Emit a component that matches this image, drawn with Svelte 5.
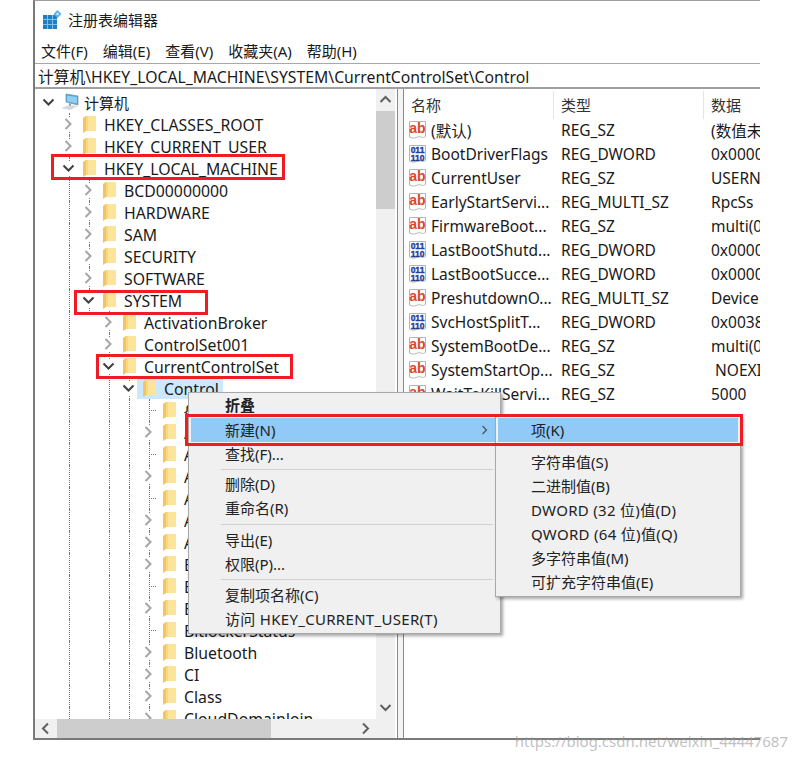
<script lang="ts">
    const menus = ["文件(F)", "编辑(E)", "查看(V)", "收藏夹(A)", "帮助(H)"];

    // d = depth, leaf = no chevron, open = expanded
    const tree = [
        { d: 1, name: "HKEY_CLASSES_ROOT" },
        { d: 1, name: "HKEY_CURRENT_USER" },
        { d: 1, name: "HKEY_LOCAL_MACHINE", open: true },
        { d: 2, name: "BCD00000000" },
        { d: 2, name: "HARDWARE" },
        { d: 2, name: "SAM" },
        { d: 2, name: "SECURITY" },
        { d: 2, name: "SOFTWARE" },
        { d: 2, name: "SYSTEM", open: true },
        { d: 3, name: "ActivationBroker" },
        { d: 3, name: "ControlSet001" },
        { d: 3, name: "CurrentControlSet", open: true },
        { d: 4, name: "Control", open: true, selected: true },
        { d: 5, name: "{7746D80F-97E0-4E26-9543-26B41FC22F79}", leaf: true },
        { d: 5, name: "AccessibilitySettings" },
        { d: 5, name: "ACPI", leaf: true },
        { d: 5, name: "AGP" },
        { d: 5, name: "AppID", leaf: true },
        { d: 5, name: "AppReadiness" },
        { d: 5, name: "Arbiters" },
        { d: 5, name: "BackupRestore" },
        { d: 5, name: "BGFX", leaf: true },
        { d: 5, name: "BitLocker" },
        { d: 5, name: "BitlockerStatus", leaf: true },
        { d: 5, name: "Bluetooth" },
        { d: 5, name: "CI" },
        { d: 5, name: "Class" },
        { d: 5, name: "CloudDomainJoin" },
    ];

    // dotted guides: x inside the tree, first and last row index
    const guides = [
        { x: 34, from: 0, to: 99 },
        { x: 54, from: 3, to: 8 },
        { x: 74, from: 9, to: 99 },
        { x: 94, from: 12, to: 99 },
        { x: 114, from: 13, to: 99 },
    ];

    const values = [
        ["(默认)", "REG_SZ", "(数值未", "s"],
        ["BootDriverFlags", "REG_DWORD", "0x00000", "b"],
        ["CurrentUser", "REG_SZ", "USERN", "s"],
        ["EarlyStartServi...", "REG_MULTI_SZ", "RpcSs", "s"],
        ["FirmwareBoot...", "REG_SZ", "multi(0", "s"],
        ["LastBootShutd...", "REG_DWORD", "0x00000", "b"],
        ["LastBootSucce...", "REG_DWORD", "0x00000", "b"],
        ["PreshutdownO...", "REG_MULTI_SZ", "Device", "s"],
        ["SvcHostSplitT...", "REG_DWORD", "0x00380", "b"],
        ["SystemBootDe...", "REG_SZ", "multi(0", "s"],
        ["SystemStartOp...", "REG_SZ", " NOEXI", "s"],
        ["WaitToKillServi...", "REG_SZ", "5000", "s"],
    ];

    const mainMenu = [
        [{ t: "折叠", bold: true }, { t: "新建(N)", hot: true, sub: true }, { t: "查找(F)..." }],
        [{ t: "删除(D)" }, { t: "重命名(R)" }],
        [{ t: "导出(E)" }, { t: "权限(P)..." }],
        [{ t: "复制项名称(C)" }, { t: "访问 HKEY_CURRENT_USER(T)", wide: true }],
    ];

    const subMenu = ["字符串值(S)", "二进制值(B)", "DWORD (32 位)值(D)", "QWORD (64 位)值(Q)", "多字符串值(M)", "可扩充字符串值(E)"];
</script>

{#snippet folder()}
    <svg class="folder" width="14" height="19" viewBox="0 0 14 19">
        <path d="M3 1h11v15H3z" fill="#fde49b" />
        <path d="M1 3 4 1v15l-3 2z" fill="#f3c562" />
        <path d="M4 1h2v15H4z" fill="#fbd77f" />
    </svg>
{/snippet}

{#snippet chevron(open)}
    <svg class="chev" width="17" height="14" viewBox="0 0 17 14">
        {#if open}
            <path d="M3.5 4.5 8.5 9.5 13.500 4.500" fill="none" stroke="#404040" stroke-width="2" />
        {:else}
            <path d="M5.500 2 10.500 7 5.500 12" fill="none" stroke="#a6a6a6" stroke-width="2" />
        {/if}
    </svg>
{/snippet}

<div class="page">
    <div class="window">
        <div class="title">
            <svg width="20" height="20" viewBox="0 0 20 20">
                <path d="M1 5h14v14H1z" fill="#1f7fc4" />
                <path d="M5.500 5v14M10.500 5v14M1 9.500h14M1 14.500h14" stroke="#7fc0ea" />
                <path d="M15.500 0l4 4-4 4-4-4z" fill="#5ab2e6" />
                <path d="M15.500 2.500l1.500 1.500-1.500 1.500-1.500-1.500z" fill="#d8eefb" />
            </svg>
            <span>注册表编辑器</span>
        </div>
        <div class="menubar">
            {#each menus as m}<span>{m}</span>{/each}
        </div>
        <div class="address">计算机\HKEY_LOCAL_MACHINE\SYSTEM\CurrentControlSet\Control</div>

        <div class="panes">
            <div class="tree-pane">
                <div class="tree">
                    <div class="row">
                        {@render chevron(true)}
                        <span class="node">
                            <svg class="computer" width="19" height="18" viewBox="0 0 19 18">
                                <path d="M6 1 18 3v9L6 9z" fill="#3f9fd8" stroke="#8a9aa8" stroke-width=".8" />
                                <path d="M7 2.500 17 4v6.500L7 8.500z" fill="#8fd0f2" />
                                <path d="M1 15l9-3 8 1-8 4z" fill="#d4d8dc" />
                                <path d="M10 10.500v2" stroke="#8a9aa8" stroke-width="2" />
                            </svg>
                            <span class="computer-label">计算机</span>
                        </span>
                    </div>
                    {#each tree as row, i}
                        <div class="row" style="padding-left: {row.d * 20 + 5}px">
                            {#each guides.filter((g) => i >= g.from && i <= g.to) as g}
                                <i class="guide" style="left: {g.x}px"></i>
                            {/each}
                            {#if row.leaf}
                                <i class="stub" style="left: {row.d * 20 + 14}px"></i>
                                <span class="chev-gap"></span>
                            {:else}
                                {@render chevron(row.open)}
                            {/if}
                            <span class="node" class:selected={row.selected}>
                                {@render folder()}
                                <span class="label">{row.name}</span>
                            </span>
                        </div>
                    {/each}
                </div>
                <div class="vbar">
                    <svg width="19" height="22" viewBox="0 0 19 22"><path d="M4.500 13 9.500 8 14.500 13" fill="none" stroke="#606060" stroke-width="2" /></svg>
                    <div class="vthumb"></div>
                    <svg class="down" width="19" height="22" viewBox="0 0 19 22"><path d="M4.500 9 9.500 14 14.500 9" fill="none" stroke="#606060" stroke-width="2" /></svg>
                </div>
                <div class="hbar">
                    <svg width="22" height="19" viewBox="0 0 22 19"><path d="M13 4.500 8 9.500 13 14.500" fill="none" stroke="#606060" stroke-width="2" /></svg>
                    <div class="hthumb"></div>
                    <svg class="right" width="22" height="19" viewBox="0 0 22 19"><path d="M9 4.500 14 9.500 9 14.500" fill="none" stroke="#606060" stroke-width="2" /></svg>
                </div>
                <div class="corner"></div>
            </div>
            <div class="splitter"></div>
            <div class="list">
                <div class="list-head">
                    <span>名称</span>
                    <span>类型</span>
                    <span>数据</span>
                </div>
                {#each values as v}
                    <div class="list-row">
                        <span class="cell-name">
                            <svg width="19" height="20" viewBox="0 0 19 20">
                                <path d="M1.500 1.500h16v15c-3 2.500-5-1-8 .5s-5 1.500-8 0z" fill="#fff" stroke="#b5b5b5" />
                                {#if v[3] === "s"}
                                    <text class="ab" x="9.500" y="13" text-anchor="middle">ab</text>
                                {:else}
                                    <text class="bin" x="9.500" y="8.500" text-anchor="middle">011</text>
                                    <text class="bin" x="9.500" y="16.500" text-anchor="middle">110</text>
                                {/if}
                            </svg>
                            <span>{v[0]}</span>
                        </span>
                        <span class="cell-type">{v[1]}</span>
                        <span class="cell-data">{v[2]}</span>
                    </div>
                {/each}
            </div>
        </div>
    </div>

    <div class="menu main-menu">
        {#each mainMenu as group, g}
            {#if g > 0}<div class="sep" class:tight={g === 1} class:last={g === 3}></div>{/if}
            {#each group as item}
                <div class="item" class:hot={item.hot} class:bold={item.bold} class:wide={item.wide}>
                    {item.t}
                    {#if item.sub}
                        <svg class="sub-arrow" width="8" height="12" viewBox="0 0 8 12"><path d="M1.500 2 5.500 6 1.500 10" fill="none" stroke="#505050" stroke-width="1.200" /></svg>
                    {/if}
                </div>
            {/each}
        {/each}
    </div>

    <div class="menu sub-menu">
        <div class="item hot">项(K)</div>
        <div class="sep short"></div>
        {#each subMenu as s}
            <div class="item" class:wide={s.includes("WORD")}>{s}</div>
        {/each}
    </div>

    <i class="mark m1"></i>
    <i class="mark m2"></i>
    <i class="mark m3"></i>
    <i class="mark m4"></i>

    <div class="watermark">https://blog.csdn.net/weixin_44447687</div>
</div>

<style>
    :global(body) {
        background: #fff;
    }

    .page {
        position: relative;
        width: 796px;
        height: 760px;
        overflow: hidden;
        background: #fff;
        font-family: "Noto Sans", "Noto Sans CJK SC", sans-serif;
        font-size: 15px;
        color: #1a1a1a;
    }

    .window {
        display: flex;
        flex-direction: column;
        margin-left: 33px;
        width: 727px;
        height: 740px;
        box-sizing: border-box;
        border-top: 1px solid #a0a0a0;
        border-left: 2px solid #7a7a7a;
        border-bottom: 2px solid #7a7a7a;
    }

    .title {
        display: flex;
        align-items: center;
        gap: 6px;
        height: 37px;
        padding-left: 7px;
        box-sizing: border-box;
    }

    .menubar {
        display: flex;
        gap: 15px;
        height: 26px;
        align-items: center;
        padding-left: 6px;
        box-sizing: border-box;
        border-bottom: 1px solid #a8a8a8;
    }

    .address {
        height: 25px;
        line-height: 26px;
        padding-left: 3px;
        box-sizing: border-box;
        white-space: nowrap;
        font-size: 15.750px;
        border-bottom: 2px solid #a0a0a0;
    }

    .panes {
        flex: 1;
        display: flex;
        min-height: 0;
    }

    .tree-pane {
        display: grid;
        grid-template-columns: 341px 19px;
        grid-template-rows: 1fr 19px;
        width: 362px;
        min-height: 0;
    }

    .tree {
        overflow: hidden;
        padding-top: 2px;
        min-height: 0;
    }

    .row {
        position: relative;
        display: flex;
        align-items: center;
        height: 22px;
        padding-left: 5px;
        white-space: nowrap;
    }

    .guide {
        position: absolute;
        top: 0;
        bottom: 0;
        border-left: 1px dotted #777;
    }

    .stub {
        position: absolute;
        top: 11px;
        width: 11px;
        border-top: 1px dotted #777;
    }

    .chev {
        position: relative;
        flex: none;
        background: #fff;
    }

    .chev-gap {
        flex: none;
        width: 17px;
    }

    .node {
        position: relative;
        display: flex;
        align-items: center;
        height: 22px;
        padding: 0 4px 0 5px;
        background: #fff;
    }

    .selected {
        background: #cce8ff;
    }

    .folder {
        flex: none;
        margin-right: 8px;
    }

    .label {
        font-size: 15.800px;
        position: relative;
        top: 1px;
    }

    .computer {
        flex: none;
        margin-left: -2px;
        margin-right: 5px;
    }

    .vbar {
        display: flex;
        flex-direction: column;
        background: #f0f0f0;
        min-height: 0;
    }

    .vbar svg {
        flex: none;
    }

    .vthumb {
        height: 98px;
        background: #cdcdcd;
    }

    .down {
        margin-top: auto;
        margin-bottom: 1px;
    }

    .hbar {
        display: flex;
        background: #f0f0f0;
    }

    .hbar svg {
        flex: none;
    }

    .hthumb {
        width: 214px;
        background: #cdcdcd;
    }

    .right {
        margin-left: auto;
    }

    .corner {
        background: #f0f0f0;
    }

    .splitter {
        flex: none;
        width: 7px;
        box-sizing: border-box;
        border-left: 1px solid #8a8a8a;
        border-right: 1px solid #8a8a8a;
        background: #f4f4f4;
    }

    .list {
        flex: 1;
        min-width: 0;
        overflow: hidden;
        font-size: 15.500px;
    }

    .list-head {
        display: grid;
        grid-template-columns: 150px 150px 1fr;
        height: 27px;
        margin-top: 2px;
        font-size: 15px;
    }

    .list-head span {
        padding-left: 7px;
        line-height: 28px;
        border-right: 1px solid #e5e5e5;
        color: #333;
    }

    .list-head span:last-child {
        border-right: 0;
    }

    .list-row {
        display: grid;
        grid-template-columns: 157px 150px 1fr;
        align-items: center;
        height: 24px;
        white-space: nowrap;
    }

    .cell-name {
        display: flex;
        align-items: center;
        gap: 4px;
        padding-left: 4px;
    }

    .cell-data {
        white-space: pre;
    }

    .ab {
        font: bold 14px "Liberation Sans", sans-serif;
        fill: #d9482a;
    }

    .bin {
        font: bold 8.500px "Liberation Sans", sans-serif;
        fill: #1f3f9e;
        stroke: #1f3f9e;
        stroke-width: 0.400px;
    }

    .menu {
        position: absolute;
        box-sizing: border-box;
        background: #f0f0f0;
        border: 1px solid #a8a8a8;
        box-shadow: 2px 2px 3px rgba(0, 0, 0, 0.35);
        padding: 2px;
        white-space: nowrap;
    }

    .main-menu {
        left: 188px;
        top: 392px;
        width: 313px;
        height: 242px;
    }

    .sub-menu {
        left: 495px;
        top: 415px;
        width: 246px;
        height: 182px;
    }

    .item {
        position: relative;
        height: 24px;
        line-height: 24px;
        padding-left: 34px;
        color: #222;
    }

    .main-menu .item:first-child {
        height: 23px;
        line-height: 21px;
    }

    .sub-menu .item {
        padding-left: 33px;
    }

    .hot {
        background: #91c9f7;
    }

    .bold {
        font-weight: 700;
    }

    .wide {
        letter-spacing: 0.300px;
    }

    .sub-arrow {
        position: absolute;
        right: 9px;
        top: 6px;
    }

    .sep {
        height: 1px;
        margin: 4px 5px 3px 30px;
        background: #d0d0d0;
    }

    .sep.tight {
        margin: 3px 5px 2px 30px;
    }

    .sep.last {
        margin-top: 3px;
    }

    .sep.short {
        margin: 2px 2px 5px 30px;
    }

    .mark {
        position: absolute;
        box-sizing: border-box;
        border: 3px solid #ee1c25;
    }

    .m1 {
        left: 51px;
        top: 154px;
        width: 234px;
        height: 26px;
    }

    .m2 {
        left: 74px;
        top: 290px;
        width: 134px;
        height: 25px;
    }

    .m3 {
        left: 96px;
        top: 354px;
        width: 197px;
        height: 25px;
    }

    .m4 {
        left: 185px;
        top: 414px;
        width: 558px;
        height: 32px;
    }

    .watermark {
        position: absolute;
        right: 8px;
        top: 731px;
        font-size: 15px;
        color: rgba(150, 150, 150, 0.6);
    }
</style>
